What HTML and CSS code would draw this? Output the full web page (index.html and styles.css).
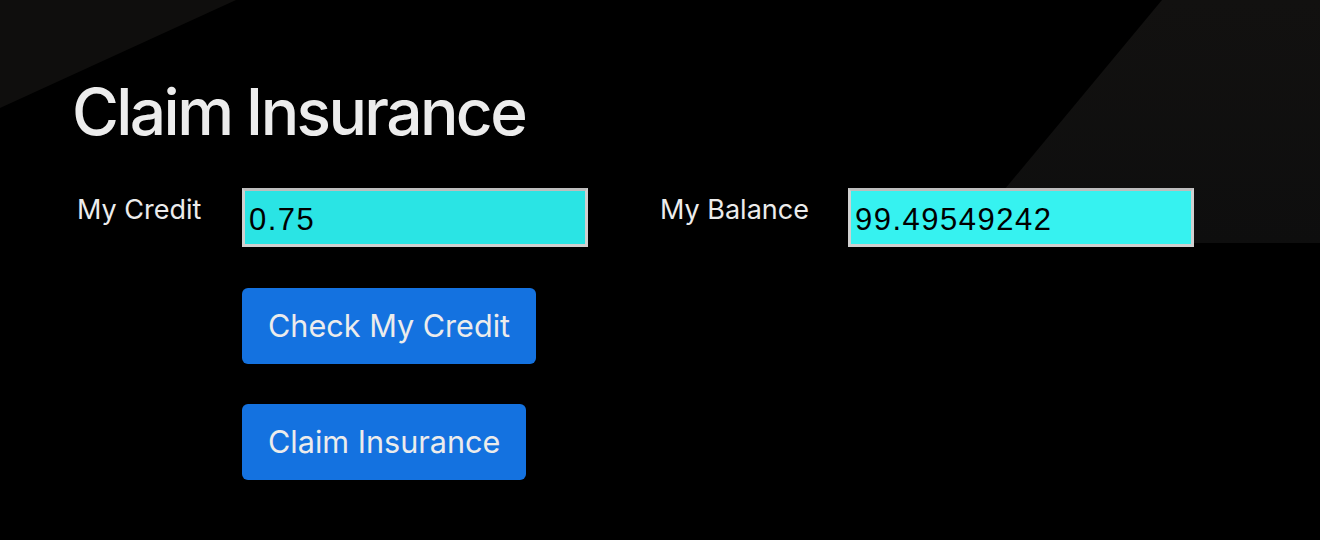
FILE: index.html
```html
<!DOCTYPE html>
<html>
<head>
<meta charset="utf-8">
<link rel="stylesheet" href="styles.css">
</head>
<body>
<main class="page">
  <h1 class="title">Claim Insurance</h1>
  <div class="fields">
    <div class="field-group">
      <label class="label label-credit">My Credit</label>
      <input class="field field-credit" type="text" value="0.75">
    </div>
    <div class="field-group">
      <label class="label label-balance">My Balance</label>
      <input class="field field-balance" type="text" value="99.49549242">
    </div>
  </div>
  <div class="actions">
    <button class="btn">Check My Credit</button>
    <button class="btn">Claim Insurance</button>
  </div>
</main>
</body>
</html>
```

FILE: styles.css
```css
html, body {
  margin: 0;
  height: 100%;
}
body {
  background: #000;
  font-family: Inter, "Noto Sans", sans-serif;
  color: #ececec;
  position: relative;
  overflow: hidden;
}
body::before {
  content: "";
  position: absolute;
  left: 0;
  top: 0;
  width: 260px;
  height: 130px;
  background: #0f0e0d;
  clip-path: polygon(0 0, 236px 0, 0 108px);
}
body::after {
  content: "";
  position: absolute;
  left: 930px;
  top: 0;
  width: 390px;
  height: 245px;
  background: linear-gradient(180deg, #121110 0%, #0e0e0e 100%);
  clip-path: polygon(232px 0, 390px 0, 390px 243px, 30px 243px);
}
.page {
  position: relative;
  z-index: 1;
  padding: 74px 0 0 72px;
}
.title {
  margin: 0;
  font-size: 64px;
  font-weight: 500;
  line-height: 76px;
  letter-spacing: -2.6px;
}
.fields {
  display: flex;
  gap: 72px;
  margin-top: 38px;
}
.field-group {
  display: flex;
  align-items: flex-start;
}
.label {
  font-size: 27px;
  line-height: 32px;
  padding-top: 6px;
  white-space: nowrap;
}
.label-credit {
  width: 165px;
  padding-left: 5px;
}
.label-balance {
  width: 188px;
}
.field {
  box-sizing: border-box;
  width: 346px;
  height: 59px;
  border: 3px solid #d0d0d0;
  border-top-color: #bdbdbd;
  padding: 4px 4px 0 4px;
  font-family: "Liberation Sans", Arial, sans-serif;
  font-size: 31px;
  letter-spacing: 1.5px;
  color: #000;
  outline: none;
  margin: 0;
}
.field-credit {
  background: #2ae4e4;
}
.field-balance {
  background: #36f2f0;
}
.actions {
  display: flex;
  flex-direction: column;
  align-items: flex-start;
  gap: 40px;
  margin: 41px 0 0 170px;
}
.btn {
  height: 76px;
  padding: 0 26px;
  border: none;
  border-radius: 6px;
  background: #1472e0;
  color: #ececec;
  font-family: Inter, "Noto Sans", sans-serif;
  font-size: 30.6px;
  line-height: 76px;
}
```
